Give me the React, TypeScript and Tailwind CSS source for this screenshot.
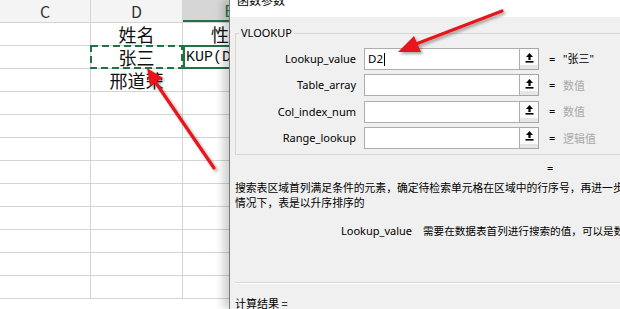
import React from "react";

const ui = { fontFamily: '"Noto Sans", "Noto Sans CJK SC", sans-serif' };
const cjk = { fontFamily: '"Noto Sans CJK SC", sans-serif' };
const mono = { fontFamily: '"Liberation Mono", "Noto Sans CJK SC", monospace' };

const params = [
  { name: "Lookup_value", value: "D2", result: "\"张三\"", dim: false },
  { name: "Table_array", value: "", result: "数值", dim: true },
  { name: "Col_index_num", value: "", result: "数值", dim: true },
  { name: "Range_lookup", value: "", result: "逻辑值", dim: true },
];

function PickIcon() {
  return (
    <svg width="11" height="11" viewBox="0 0 11 11">
      <path d="M5.5 1 L9 5 L6.6 5 L6.6 8 L4.4 8 L4.4 5 L2 5 Z" fill="#000" />
      <rect x="1.5" y="9" width="8" height="1.6" fill="#000" />
    </svg>
  );
}

function Sheet() {
  const rows = [
    { d: "姓名", e: "性别" },
    { d: "张三", e: "KUP(D2" },
    { d: "邢道荣", e: "" },
  ];
  return (
    <div className="w-[229px] shrink-0 overflow-hidden bg-white">
      {/* 列标题 */}
      <div className="flex h-[23px] border-b border-[#d4d4d4] bg-[#f4f4f4] text-[16px] text-[#333]" style={cjk}>
        <div className="w-[91px] shrink-0 border-r border-[#d4d4d4] flex items-center justify-center">C</div>
        <div className="w-[92px] shrink-0 border-r border-[#d4d4d4] flex items-center justify-center">D</div>
        <div className="w-[92px] shrink-0 bg-[#d6d6d6] border-b-2 border-[#217346] flex items-center justify-center text-[#217346]">E</div>
      </div>
      {Array.from({ length: 12 }).map((_, i) => {
        const r = rows[i];
        return (
          <div key={i} className="flex h-[23px] border-b border-[#d4d4d4]">
            <div className="w-[91px] shrink-0 border-r border-[#d4d4d4]" />
            <div
              className="relative w-[92px] shrink-0 border-r border-[#d4d4d4] flex items-center justify-center text-[18px] leading-none text-[#111]"
              style={cjk}
            >
              {r ? r.d : ""}
              {i === 1 && (
                <svg className="absolute -left-[1px] -top-[1px]" width="93" height="24">
                  <rect x="1" y="1" width="91" height="22" fill="none" stroke="#217346" strokeWidth="2" strokeDasharray="7 4" />
                </svg>
              )}
            </div>
            {i === 1 ? (
              <div
                className="w-[92px] h-[24px] shrink-0 flex items-center whitespace-nowrap border-2 border-[#217346] -mt-[1px] pl-[1px] text-[15px] leading-none text-[#111]"
                style={mono}
              >
                {r.e}
              </div>
            ) : (
              <div
                className="w-[92px] shrink-0 flex items-center justify-center whitespace-nowrap text-[18px] leading-none text-[#111]"
                style={cjk}
              >
                {r ? r.e : ""}
              </div>
            )}
          </div>
        );
      })}
    </div>
  );
}

function Dialog() {
  return (
    <div className="flex-1 flex flex-col border-l border-[#7a7a7a] shadow-[-6px_0_8px_rgba(0,0,0,0.18)] z-10" style={ui}>
      <div className="h-[17px] bg-white overflow-hidden">
        <div className="pl-[7px] -mt-[8px] text-[12px] leading-[16px] text-black" style={cjk}>函数参数</div>
      </div>
      <div className="flex-1 bg-[#f0f0f0] pl-[5px] text-[11px] text-black overflow-hidden">
        <fieldset className="mt-[9px] w-[420px] border border-[#d5d5d5] pt-[8px] pb-[5px]">
          <legend className="ml-[3px] px-[2px] text-[11px] leading-[14px]">VLOOKUP</legend>
          <div className="flex flex-col gap-[4.3px]">
            {params.map((p) => (
              <div key={p.name} className="flex items-center h-[22px]">
                <div className="w-[120px] text-right leading-[14px]">{p.name}</div>
                <div className="ml-[8px] w-[156px] h-[22px] bg-white border border-[#adadad] flex items-center pl-[3px] text-[11.5px]">
                  {p.value}
                  {p.value && <span className="ml-[1px] w-[1px] h-[13px] bg-black" />}
                </div>
                <div className="w-[19px] h-[22px] border border-[#a6a6a6] border-l-0 bg-[#e6e6e6] flex flex-col">
                  <div className="h-[16px] bg-[#fbfbfb] flex items-center justify-center">
                    <PickIcon />
                  </div>
                </div>
                <div className="ml-[10px] w-[12px]">=</div>
                <div className={"ml-[2px] " + (p.dim ? "text-[#a8a8a8]" : "text-black")} style={p.dim ? cjk : ui}>
                  {p.result}
                </div>
              </div>
            ))}
          </div>
        </fieldset>
        <div className="mt-[6px] pl-[312px] leading-[14px]">=</div>
        <div className="mt-[5px] leading-[15px] whitespace-nowrap text-[10.8px]" style={cjk}>
          搜索表区域首列满足条件的元素，确定待检索单元格在区域中的行序号，再进一步返回选定单元格的值。默认
        </div>
        <div className="leading-[15px] whitespace-nowrap text-[10.8px]" style={cjk}>情况下，表是以升序排序的</div>
        <div className="mt-[14px] flex items-center leading-[14px] whitespace-nowrap pl-[106px]">
          <span>Lookup_value</span>
          <span className="ml-[11px] text-[10.6px]" style={cjk}>需要在数据表首列进行搜索的值，可以是数值、引用或字符串</span>
        </div>
        <div className="mt-[44px] h-[2px] border-t border-[#d8d8d8] border-b border-b-white" />
        <div className="mt-[12px] leading-[14px]" style={cjk}>计算结果 =</div>
      </div>
    </div>
  );
}

function Arrows() {
  return (
    <svg className="absolute inset-0 z-20 pointer-events-none" width="620" height="309">
      <defs>
        <filter id="sh" x="-20%" y="-20%" width="140%" height="140%">
          <feDropShadow dx="2" dy="2" stdDeviation="1.5" floodColor="#000" floodOpacity="0.35" />
        </filter>
      </defs>
      <g filter="url(#sh)" fill="#e8161b" stroke="#e8161b">
        <line x1="214" y1="168" x2="156" y2="83" strokeWidth="3.2" strokeLinecap="round" />
        <polygon points="147,68 163,78 150,86" stroke="none" />
        <line x1="502" y1="11" x2="416" y2="44" strokeWidth="3.2" strokeLinecap="round" />
        <polygon points="398,52 414,36 421,52" stroke="none" />
      </g>
    </svg>
  );
}

export default function App() {
  return (
    <div className="relative w-[620px] h-[309px] overflow-hidden flex bg-white">
      <Sheet />
      <Dialog />
      <Arrows />
    </div>
  );
}
